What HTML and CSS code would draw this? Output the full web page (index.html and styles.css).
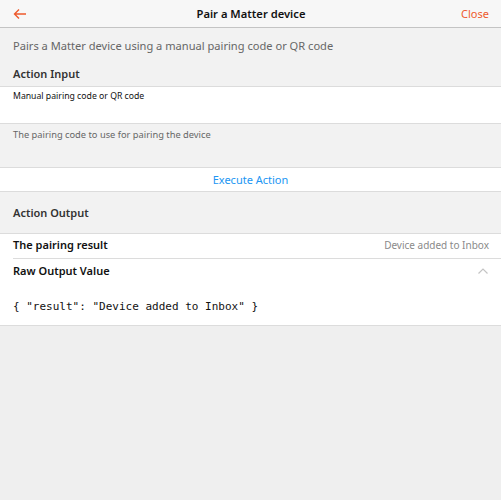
FILE: index.html
```html
<!DOCTYPE html>
<html lang="en">

<head>
  <meta charset="UTF-8">
  <meta name="viewport" content="width=device-width, initial-scale=1.0">
  <title>Pair a Matter device</title>
  <link rel="stylesheet" href="styles.css">
</head>

<body>
  <header class="navbar">
    <span class="nav-left">
      <svg width="14" height="12" viewBox="0 0 14 12">
        <path d="M13 6H1.5M6 1.5L1.5 6L6 10.5" fill="none" stroke="#ee5a2c" stroke-width="1.4" />
      </svg>
    </span>
    <span class="nav-title">Pair a Matter device</span>
    <span class="nav-right">Close</span>
  </header>

  <div class="page">
    <p class="description">Pairs a Matter device using a manual pairing code or QR code</p>

    <div class="block-title">Action Input</div>
    <div class="list">
      <div class="input-item">
        <label class="input-label">Manual pairing code or QR code</label>
        <input type="text" class="input-field">
      </div>
    </div>
    <div class="block-footer">The pairing code to use for pairing the device</div>

    <div class="list button-list">
      <a class="list-button">Execute Action</a>
    </div>

    <div class="block-title output-title">Action Output</div>
    <div class="list">
      <div class="item">
        <span class="item-title">The pairing result</span>
        <span class="item-after">Device added to Inbox</span>
      </div>
      <div class="item accordion">
        <span class="item-title">Raw Output Value</span>
        <svg width="12" height="8" viewBox="0 0 12 8">
          <path d="M1.5 6.5L6 2L10.5 6.5" fill="none" stroke="#c4c4c4" stroke-width="1.2" />
        </svg>
      </div>
      <pre class="raw-output">{ "result": "Device added to Inbox" }</pre>
    </div>
  </div>
</body>

</html>
```

FILE: styles.css
```css
body {
  font-family: "Noto Sans", "Open Sans", sans-serif;
  margin: 0;
  padding: 0;
  background-color: #efefef;
  color: #222;
  height: 500px;
  overflow: hidden;
}

.navbar {
  height: 27px;
  display: flex;
  align-items: center;
  justify-content: space-between;
  padding: 0 12px;
  background-color: #f7f7f7;
  border-bottom: 1px solid #c4c4c4;
}

.nav-left {
  width: 40px;
  display: flex;
  align-items: center;
  padding-left: 1px;
}

.nav-title {
  font-size: 11.2px;
  font-weight: 600;
  color: #111;
}

.nav-right {
  width: 40px;
  text-align: right;
  font-size: 11px;
  color: #ee5a2c;
}

.page {
  background-color: #f2f2f2;
}

.description {
  margin: 0;
  padding: 9px 13px 0;
  font-size: 11.1px;
  line-height: 17px;
  color: #666;
}

.block-title {
  padding: 11px 13px 4px;
  font-size: 11px;
  font-weight: 600;
  line-height: 17px;
  color: #333;
}

.list {
  background-color: #fff;
  border-top: 1px solid #dcdcdc;
  border-bottom: 1px solid #dcdcdc;
}

.input-item {
  height: 36px;
  padding: 0 13px;
}

.input-label {
  display: block;
  padding-top: 2px;
  font-size: 8.7px;
  line-height: 14px;
  color: #111;
}

.input-field {
  display: none;
}

.block-footer {
  height: 43px;
  padding: 5px 13px 0;
  font-size: 9.3px;
  line-height: 12px;
  color: #666;
  box-sizing: border-box;
}

.button-list {
  height: 23px;
  display: flex;
  align-items: center;
  justify-content: center;
}

.list-button {
  font-size: 11px;
  color: #2196f3;
}

.output-title {
  padding-top: 12px;
  padding-bottom: 12px;
}

.item {
  height: 25px;
  margin-left: 13px;
  padding-right: 12px;
  padding-bottom: 3px;
  box-sizing: border-box;
  display: flex;
  align-items: center;
  justify-content: space-between;
  border-bottom: 1px solid #dcdcdc;
}

.item-title {
  font-size: 11px;
  font-weight: 600;
  color: #111;
}

.item-after {
  font-size: 10px;
  color: #8a8a8a;
}

.accordion {
  height: 24px;
  padding-bottom: 1px;
  border-bottom: none;
}

.raw-output {
  margin: 0;
  padding: 15px 13px 10px;
  font-family: "DejaVu Sans Mono", monospace;
  font-size: 11px;
  line-height: 17px;
  color: #111;
}
```
